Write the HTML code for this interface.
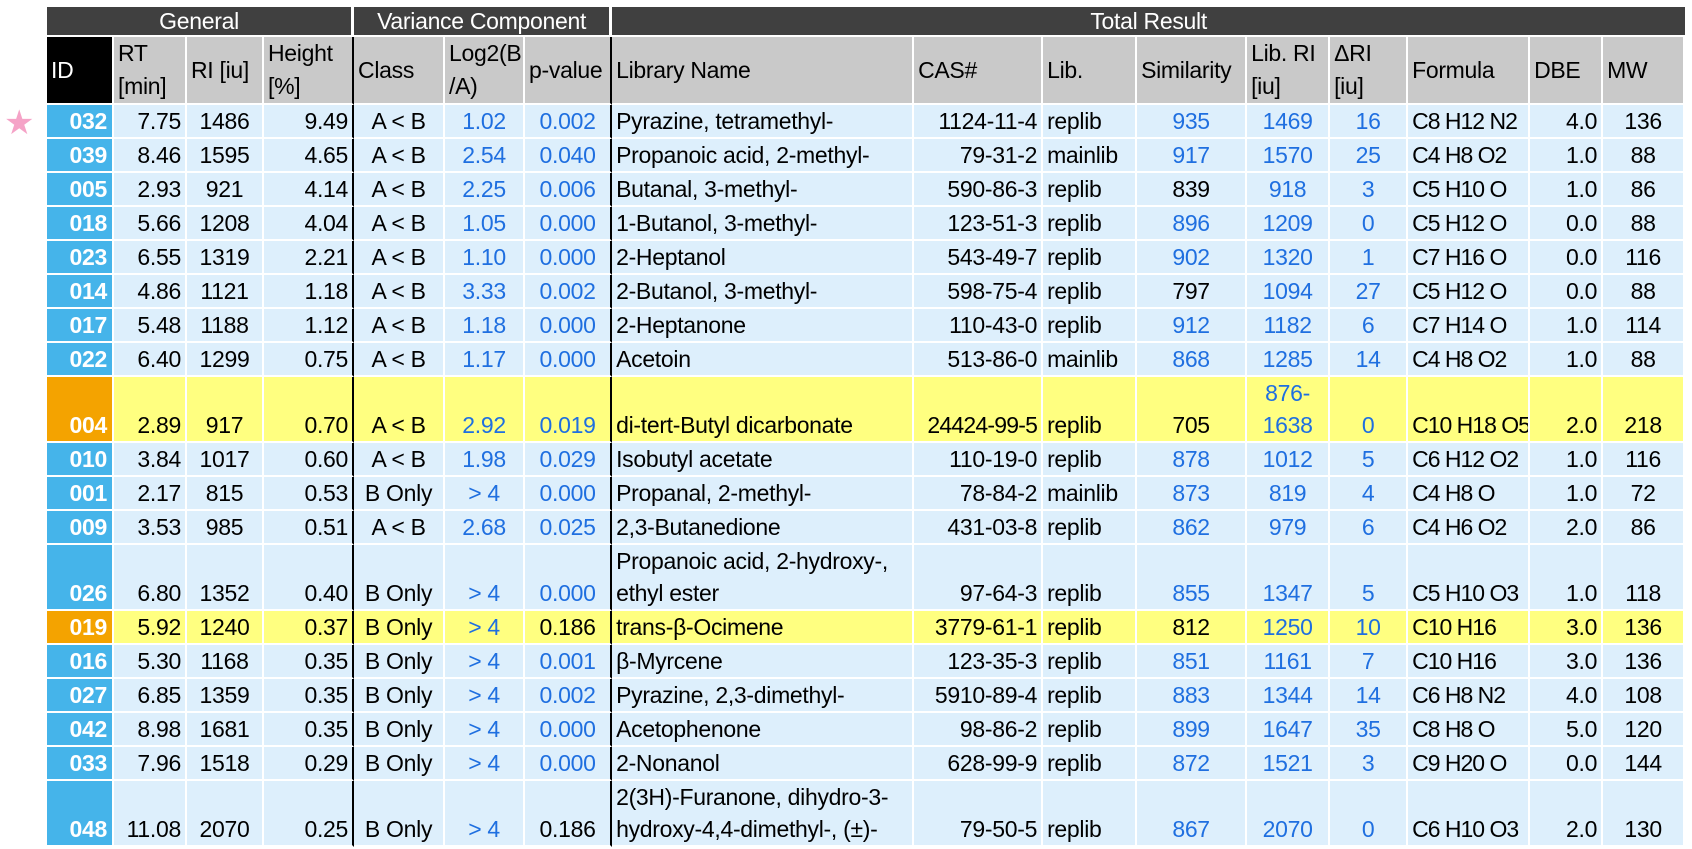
<!DOCTYPE html>
<html><head><meta charset="utf-8">
<style>
html,body{margin:0;padding:0;background:#fff;width:1692px;height:849px;overflow:hidden}
body{position:relative;font-family:"Liberation Sans",sans-serif}
.star{position:absolute;left:4px;top:106px;font-size:34px;color:#f5a3c7;line-height:34px}
table{position:absolute;left:47px;top:7px;width:1638px;table-layout:fixed;border-collapse:separate;border-spacing:0;font-size:23px;letter-spacing:-0.3px;color:#000}
td{box-sizing:border-box;border-right:2px solid #fff;border-bottom:2px solid #fff;padding:0 4px;white-space:nowrap;overflow:hidden;vertical-align:bottom;line-height:32px;background:#ddeffc}
tr.h1 td{background:#404040;color:#fff;text-align:center;height:30px;line-height:28px;vertical-align:middle;border-right:3px solid #fff}
tr.h2 td{background:#c9c9c9;height:68px;vertical-align:middle;line-height:33px;white-space:normal}
tr.h2 td.idh{background:#000;color:#fff}
tr.r td{height:33px}
tr.d td{height:66px}
td.id{background:#45b4ea;color:#fff;font-weight:bold;text-align:right;padding-right:5px}
tr.y td{background:#ffff80}
tr.y td.id{background:#f4a300}
td.bk{border-right:2px solid #000}
.R{text-align:right}.C{text-align:center}
.b{color:#1f6fe0}
.f{letter-spacing:-1px}
</style></head><body>
<div class="star">★</div>
<table>
<colgroup>
<col style="width:67px"><col style="width:73px"><col style="width:77px"><col style="width:90px">
<col style="width:91px"><col style="width:80px"><col style="width:87px"><col style="width:302px">
<col style="width:129px"><col style="width:94px"><col style="width:110px"><col style="width:83px">
<col style="width:78px"><col style="width:122px"><col style="width:73px"><col style="width:82px">
</colgroup>
<tr class="h1"><td colspan="4">General</td><td colspan="3">Variance Component</td><td colspan="9" style="border-right:none">Total Result</td></tr>
<tr class="h2"><td class="idh">ID</td><td>RT [min]</td><td>RI [iu]</td><td class="bk">Height [%]</td><td>Class</td><td>Log2(B /A)</td><td class="bk">p-value</td><td>Library Name</td><td>CAS#</td><td>Lib.</td><td>Similarity</td><td>Lib. RI [iu]</td><td>ΔRI [iu]</td><td>Formula</td><td>DBE</td><td>MW</td></tr>

<tr class="r"><td class="id">032</td><td class="R">7.75</td><td class="C">1486</td><td class="R bk">9.49</td><td class="C">A &lt; B</td><td class="C b">1.02</td><td class="C b bk">0.002</td><td>Pyrazine, tetramethyl-</td><td class="R">1124-11-4</td><td>replib</td><td class="C b">935</td><td class="C b">1469</td><td class="C b">16</td><td class="f">C8 H12 N2</td><td class="R">4.0</td><td class="C">136</td></tr>
<tr class="r"><td class="id">039</td><td class="R">8.46</td><td class="C">1595</td><td class="R bk">4.65</td><td class="C">A &lt; B</td><td class="C b">2.54</td><td class="C b bk">0.040</td><td>Propanoic acid, 2-methyl-</td><td class="R">79-31-2</td><td>mainlib</td><td class="C b">917</td><td class="C b">1570</td><td class="C b">25</td><td class="f">C4 H8 O2</td><td class="R">1.0</td><td class="C">88</td></tr>
<tr class="r"><td class="id">005</td><td class="R">2.93</td><td class="C">921</td><td class="R bk">4.14</td><td class="C">A &lt; B</td><td class="C b">2.25</td><td class="C b bk">0.006</td><td>Butanal, 3-methyl-</td><td class="R">590-86-3</td><td>replib</td><td class="C">839</td><td class="C b">918</td><td class="C b">3</td><td class="f">C5 H10 O</td><td class="R">1.0</td><td class="C">86</td></tr>
<tr class="r"><td class="id">018</td><td class="R">5.66</td><td class="C">1208</td><td class="R bk">4.04</td><td class="C">A &lt; B</td><td class="C b">1.05</td><td class="C b bk">0.000</td><td>1-Butanol, 3-methyl-</td><td class="R">123-51-3</td><td>replib</td><td class="C b">896</td><td class="C b">1209</td><td class="C b">0</td><td class="f">C5 H12 O</td><td class="R">0.0</td><td class="C">88</td></tr>
<tr class="r"><td class="id">023</td><td class="R">6.55</td><td class="C">1319</td><td class="R bk">2.21</td><td class="C">A &lt; B</td><td class="C b">1.10</td><td class="C b bk">0.000</td><td>2-Heptanol</td><td class="R">543-49-7</td><td>replib</td><td class="C b">902</td><td class="C b">1320</td><td class="C b">1</td><td class="f">C7 H16 O</td><td class="R">0.0</td><td class="C">116</td></tr>
<tr class="r"><td class="id">014</td><td class="R">4.86</td><td class="C">1121</td><td class="R bk">1.18</td><td class="C">A &lt; B</td><td class="C b">3.33</td><td class="C b bk">0.002</td><td>2-Butanol, 3-methyl-</td><td class="R">598-75-4</td><td>replib</td><td class="C">797</td><td class="C b">1094</td><td class="C b">27</td><td class="f">C5 H12 O</td><td class="R">0.0</td><td class="C">88</td></tr>
<tr class="r"><td class="id">017</td><td class="R">5.48</td><td class="C">1188</td><td class="R bk">1.12</td><td class="C">A &lt; B</td><td class="C b">1.18</td><td class="C b bk">0.000</td><td>2-Heptanone</td><td class="R">110-43-0</td><td>replib</td><td class="C b">912</td><td class="C b">1182</td><td class="C b">6</td><td class="f">C7 H14 O</td><td class="R">1.0</td><td class="C">114</td></tr>
<tr class="r"><td class="id">022</td><td class="R">6.40</td><td class="C">1299</td><td class="R bk">0.75</td><td class="C">A &lt; B</td><td class="C b">1.17</td><td class="C b bk">0.000</td><td>Acetoin</td><td class="R">513-86-0</td><td>mainlib</td><td class="C b">868</td><td class="C b">1285</td><td class="C b">14</td><td class="f">C4 H8 O2</td><td class="R">1.0</td><td class="C">88</td></tr>
<tr class="d y"><td class="id">004</td><td class="R">2.89</td><td class="C">917</td><td class="R bk">0.70</td><td class="C">A &lt; B</td><td class="C b">2.92</td><td class="C b bk">0.019</td><td>di-tert-Butyl dicarbonate</td><td class="R" style="letter-spacing:-0.8px">24424-99-5</td><td>replib</td><td class="C">705</td><td class="C b">876-<br>1638</td><td class="C b">0</td><td class="f">C10 H18 O5</td><td class="R">2.0</td><td class="C">218</td></tr>
<tr class="r"><td class="id">010</td><td class="R">3.84</td><td class="C">1017</td><td class="R bk">0.60</td><td class="C">A &lt; B</td><td class="C b">1.98</td><td class="C b bk">0.029</td><td>Isobutyl acetate</td><td class="R">110-19-0</td><td>replib</td><td class="C b">878</td><td class="C b">1012</td><td class="C b">5</td><td class="f">C6 H12 O2</td><td class="R">1.0</td><td class="C">116</td></tr>
<tr class="r"><td class="id">001</td><td class="R">2.17</td><td class="C">815</td><td class="R bk">0.53</td><td class="C">B Only</td><td class="C b">&gt; 4</td><td class="C b bk">0.000</td><td>Propanal, 2-methyl-</td><td class="R">78-84-2</td><td>mainlib</td><td class="C b">873</td><td class="C b">819</td><td class="C b">4</td><td class="f">C4 H8 O</td><td class="R">1.0</td><td class="C">72</td></tr>
<tr class="r"><td class="id">009</td><td class="R">3.53</td><td class="C">985</td><td class="R bk">0.51</td><td class="C">A &lt; B</td><td class="C b">2.68</td><td class="C b bk">0.025</td><td>2,3-Butanedione</td><td class="R">431-03-8</td><td>replib</td><td class="C b">862</td><td class="C b">979</td><td class="C b">6</td><td class="f">C4 H6 O2</td><td class="R">2.0</td><td class="C">86</td></tr>
<tr class="d"><td class="id">026</td><td class="R">6.80</td><td class="C">1352</td><td class="R bk">0.40</td><td class="C">B Only</td><td class="C b">&gt; 4</td><td class="C b bk">0.000</td><td>Propanoic acid, 2-hydroxy-,<br>ethyl ester</td><td class="R">97-64-3</td><td>replib</td><td class="C b">855</td><td class="C b">1347</td><td class="C b">5</td><td class="f">C5 H10 O3</td><td class="R">1.0</td><td class="C">118</td></tr>
<tr class="r y"><td class="id">019</td><td class="R">5.92</td><td class="C">1240</td><td class="R bk">0.37</td><td class="C">B Only</td><td class="C b">&gt; 4</td><td class="C bk">0.186</td><td>trans-β-Ocimene</td><td class="R">3779-61-1</td><td>replib</td><td class="C">812</td><td class="C b">1250</td><td class="C b">10</td><td class="f">C10 H16</td><td class="R">3.0</td><td class="C">136</td></tr>
<tr class="r"><td class="id">016</td><td class="R">5.30</td><td class="C">1168</td><td class="R bk">0.35</td><td class="C">B Only</td><td class="C b">&gt; 4</td><td class="C b bk">0.001</td><td>β-Myrcene</td><td class="R">123-35-3</td><td>replib</td><td class="C b">851</td><td class="C b">1161</td><td class="C b">7</td><td class="f">C10 H16</td><td class="R">3.0</td><td class="C">136</td></tr>
<tr class="r"><td class="id">027</td><td class="R">6.85</td><td class="C">1359</td><td class="R bk">0.35</td><td class="C">B Only</td><td class="C b">&gt; 4</td><td class="C b bk">0.002</td><td>Pyrazine, 2,3-dimethyl-</td><td class="R">5910-89-4</td><td>replib</td><td class="C b">883</td><td class="C b">1344</td><td class="C b">14</td><td class="f">C6 H8 N2</td><td class="R">4.0</td><td class="C">108</td></tr>
<tr class="r"><td class="id">042</td><td class="R">8.98</td><td class="C">1681</td><td class="R bk">0.35</td><td class="C">B Only</td><td class="C b">&gt; 4</td><td class="C b bk">0.000</td><td>Acetophenone</td><td class="R">98-86-2</td><td>replib</td><td class="C b">899</td><td class="C b">1647</td><td class="C b">35</td><td class="f">C8 H8 O</td><td class="R">5.0</td><td class="C">120</td></tr>
<tr class="r"><td class="id">033</td><td class="R">7.96</td><td class="C">1518</td><td class="R bk">0.29</td><td class="C">B Only</td><td class="C b">&gt; 4</td><td class="C b bk">0.000</td><td>2-Nonanol</td><td class="R">628-99-9</td><td>replib</td><td class="C b">872</td><td class="C b">1521</td><td class="C b">3</td><td class="f">C9 H20 O</td><td class="R">0.0</td><td class="C">144</td></tr>
<tr class="d"><td class="id">048</td><td class="R">11.08</td><td class="C">2070</td><td class="R bk">0.25</td><td class="C">B Only</td><td class="C b">&gt; 4</td><td class="C bk">0.186</td><td>2(3H)-Furanone, dihydro-3-<br>hydroxy-4,4-dimethyl-, (±)-</td><td class="R">79-50-5</td><td>replib</td><td class="C b">867</td><td class="C b">2070</td><td class="C b">0</td><td class="f">C6 H10 O3</td><td class="R">2.0</td><td class="C">130</td></tr>
</table>
</body></html>
